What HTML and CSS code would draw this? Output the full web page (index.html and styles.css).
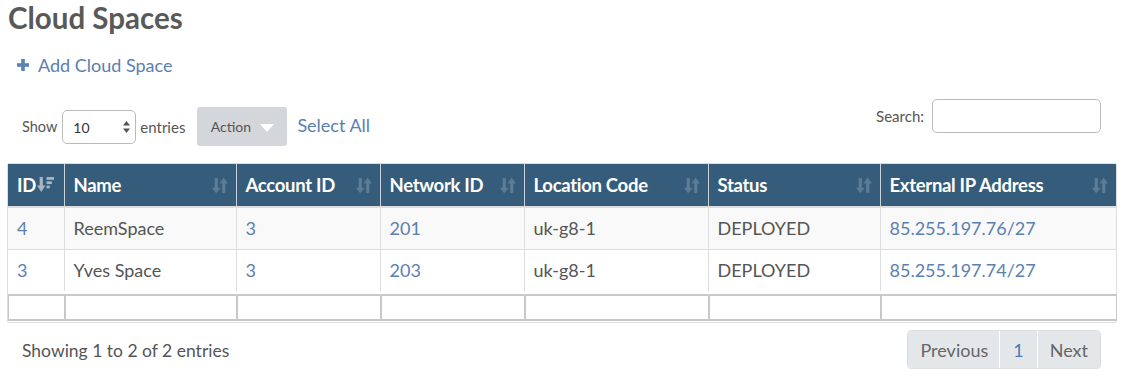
FILE: index.html
```html
<!DOCTYPE html>
<html>
<head>
<meta charset="utf-8">
<link rel="stylesheet" href="styles.css">
</head>
<body>
<h1 class="title">Cloud Spaces</h1>
<a class="add-link" href="#"><svg class="plus" width="12" height="12" viewBox="0 0 12 12"><rect x="4.2" y="0" width="3.6" height="12" fill="currentColor"/><rect x="0" y="4.2" width="12" height="3.6" fill="currentColor"/></svg>Add Cloud Space</a>

<div class="controls">
  <div class="left">
    <label class="lbl">Show</label>
    <div class="select"><span>10</span><svg width="7" height="12" viewBox="0 0 7 12"><polygon points="3.5,0 7,4.5 0,4.5" fill="#555"/><polygon points="3.5,12 7,7.5 0,7.5" fill="#555"/></svg></div>
    <label class="lbl">entries</label>
    <div class="action">Action <svg width="14" height="8" viewBox="0 0 14 8"><polygon points="0,0 14,0 7,8" fill="#fff"/></svg></div>
    <a class="select-all" href="#">Select All</a>
  </div>
  <div class="right">
    <label class="lbl">Search:</label>
    <div class="search"></div>
  </div>
</div>

<div class="table-wrap">
  <table class="grid">
    <colgroup><col style="width:56px"><col style="width:172px"><col style="width:144px"><col style="width:144px"><col style="width:184px"><col style="width:172px"><col style="width:236px"></colgroup>
    <thead>
      <tr>
        <th class="id-th"><span>ID</span><svg class="amt" width="17" height="17" viewBox="0 0 16 16"><rect x="2.5" y="1" width="3" height="9" fill="currentColor"/><polygon points="0,9 8,9 4,15" fill="currentColor"/><rect x="9" y="1" width="7" height="2.6" fill="currentColor"/><rect x="9" y="5" width="5" height="2.6" fill="currentColor"/><rect x="9" y="9" width="3" height="2.6" fill="currentColor"/></svg></th>
        <th><span>Name</span><svg class="sort" width="16" height="17" viewBox="0 0 15 16"><rect x="2.5" y="1" width="3" height="10" fill="currentColor"/><polygon points="0,10 8,10 4,15.5" fill="currentColor"/><rect x="9.5" y="5" width="3" height="10" fill="currentColor"/><polygon points="7,6 15,6 11,0.5" fill="currentColor"/></svg></th>
        <th><span>Account ID</span><svg class="sort" width="16" height="17" viewBox="0 0 15 16"><rect x="2.5" y="1" width="3" height="10" fill="currentColor"/><polygon points="0,10 8,10 4,15.5" fill="currentColor"/><rect x="9.5" y="5" width="3" height="10" fill="currentColor"/><polygon points="7,6 15,6 11,0.5" fill="currentColor"/></svg></th>
        <th><span>Network ID</span><svg class="sort" width="16" height="17" viewBox="0 0 15 16"><rect x="2.5" y="1" width="3" height="10" fill="currentColor"/><polygon points="0,10 8,10 4,15.5" fill="currentColor"/><rect x="9.5" y="5" width="3" height="10" fill="currentColor"/><polygon points="7,6 15,6 11,0.5" fill="currentColor"/></svg></th>
        <th><span>Location Code</span><svg class="sort" width="16" height="17" viewBox="0 0 15 16"><rect x="2.5" y="1" width="3" height="10" fill="currentColor"/><polygon points="0,10 8,10 4,15.5" fill="currentColor"/><rect x="9.5" y="5" width="3" height="10" fill="currentColor"/><polygon points="7,6 15,6 11,0.5" fill="currentColor"/></svg></th>
        <th><span>Status</span><svg class="sort" width="16" height="17" viewBox="0 0 15 16"><rect x="2.5" y="1" width="3" height="10" fill="currentColor"/><polygon points="0,10 8,10 4,15.5" fill="currentColor"/><rect x="9.5" y="5" width="3" height="10" fill="currentColor"/><polygon points="7,6 15,6 11,0.5" fill="currentColor"/></svg></th>
        <th><span>External IP Address</span><svg class="sort" width="16" height="17" viewBox="0 0 15 16"><rect x="2.5" y="1" width="3" height="10" fill="currentColor"/><polygon points="0,10 8,10 4,15.5" fill="currentColor"/><rect x="9.5" y="5" width="3" height="10" fill="currentColor"/><polygon points="7,6 15,6 11,0.5" fill="currentColor"/></svg></th>
      </tr>
    </thead>
    <tbody>
      <tr class="odd">
        <td><a href="#">4</a></td><td>ReemSpace</td><td><a href="#">3</a></td><td><a href="#">201</a></td><td>uk-g8-1</td><td>DEPLOYED</td><td><a href="#">85.255.197.76/27</a></td>
      </tr>
      <tr>
        <td><a href="#">3</a></td><td>Yves Space</td><td><a href="#">3</a></td><td><a href="#">203</a></td><td>uk-g8-1</td><td>DEPLOYED</td><td><a href="#">85.255.197.74/27</a></td>
      </tr>
    </tbody>
  </table>
  <table class="filters">
    <colgroup><col style="width:56px"><col style="width:172px"><col style="width:144px"><col style="width:144px"><col style="width:184px"><col style="width:172px"><col style="width:236px"></colgroup>
    <tr><td></td><td></td><td></td><td></td><td></td><td></td><td></td></tr>
  </table>
</div>

<div class="footer">
  <div class="info">Showing 1 to 2 of 2 entries</div>
  <div class="pager">
    <span class="pg disabled">Previous</span><span class="pg current">1</span><span class="pg disabled">Next</span>
  </div>
</div>
</body>
</html>
```
FILE: styles.css
```css
* { box-sizing: border-box; }
body {
  margin: 0;
  padding: 0 10px 0 8px;
  font-family: Lato, "Open Sans", Arial, sans-serif;
  color: #555;
  background: #fff;
}
a { color: #5b80b0; text-decoration: none; }
.title {
  margin: 0;
  padding-top: 1px;
  font-size: 29.5px;
  line-height: 34px;
  font-weight: 700;
  color: #595959;
}
.add-link {
  display: inline-flex;
  align-items: center;
  gap: 9px;
  margin: 19px 0 0 9px;
  font-size: 18px;
  line-height: 22px;
  color: #5b80b0;
}
.plus { color: #5b84b5; }
.controls {
  display: flex;
  justify-content: space-between;
  align-items: flex-start;
  margin-top: 24px;
  padding: 0 15px 0 14px;
  height: 63px;
}
.left { display: flex; align-items: center; gap: 4px; margin-top: 7px; }
.lbl { font-size: 14.5px; color: #555; }
.left .lbl + .select + .lbl { font-size: 15px; }
.select {
  width: 74px; height: 34px;
  margin-top: 1px;
  margin-left: 1px;
  border: 1px solid #bbb;
  border-radius: 5px;
  display: flex; align-items: center; justify-content: space-between;
  padding: 0 5px 0 10px;
  font-size: 14px; color: #333;
}
.action {
  margin-left: 8px;
  width: 90px; height: 39px;
  background: #d3d6da;
  border-radius: 3px;
  display: flex; align-items: center; justify-content: center; gap: 9px;
  font-size: 14px; color: #555;
}
.action svg { margin-top: 2px; }
.select-all { margin-left: 6px; font-size: 18px; margin-top: -4px; }
.right { display: flex; align-items: center; gap: 8px; margin-top: -1px; }
.right .lbl { font-size: 15px; }
.search {
  width: 169px; height: 34px;
  border: 1px solid #bbb;
  border-radius: 5px;
}
.table-wrap {
  margin: 0 -1px;
  border: 1px solid #ddd;
  border-radius: 2px;
  padding-bottom: 1px;
}
table { border-collapse: collapse; table-layout: fixed; width: 1108px; }
.grid th {
  background: #365c7b;
  color: #fff;
  font-size: 18.5px;
  font-weight: 700;
  text-align: left;
  height: 43px;
  padding: 0 8px 0 9px;
  border-left: 1px solid #c9d2da;
  border-bottom: 2px solid #ddd;
  white-space: nowrap;
  position: relative;
}
.grid th:first-child { border-left: none; }
.grid th span { letter-spacing: -0.3px; }
.grid th .sort { position: absolute; right: 8px; top: 13px; color: #5d7c95; }
.grid th .amt { position: absolute; left: 29px; top: 12px; color: #a7b6c4; }
.grid td {
  font-size: 18px;
  height: 42px;
  padding: 0 9px;
  border-left: 1px solid #ddd;
  border-top: 1px solid #ddd;
  white-space: nowrap;
}
.grid td:first-child { border-left: none; }
.grid tr.odd td { background: #f9f9f9; }
.grid tbody tr:first-child td { border-top: none; }
.filters { margin-top: 3px; }
.filters td {
  height: 25px;
  border: 2px solid #c8c8c8;
}
.filters td:first-child { border-left-width: 1px; }
.filters td:last-child { border-right-width: 1px; }
.footer {
  display: flex;
  justify-content: space-between;
  align-items: center;
  padding: 7px 15px 0 14px;
}
.info { font-size: 17.5px; color: #555; margin-top: 1px; }
.pager {
  display: flex;
  border-radius: 4px;
  overflow: hidden;
  border: 1px solid #dcdfe2;
}
.pg {
  height: 37px;
  display: flex; align-items: center;
  background: #e4e7ea;
  font-size: 18px;
  color: #666;
  border-left: 1px solid #fff;
}
.pg:first-child { border-left: none; padding: 0 11px 0 12px; }
.pg.current { color: #4f7bb0; padding: 0 13px; }
.pg:last-child { padding: 0 12px; }
```
